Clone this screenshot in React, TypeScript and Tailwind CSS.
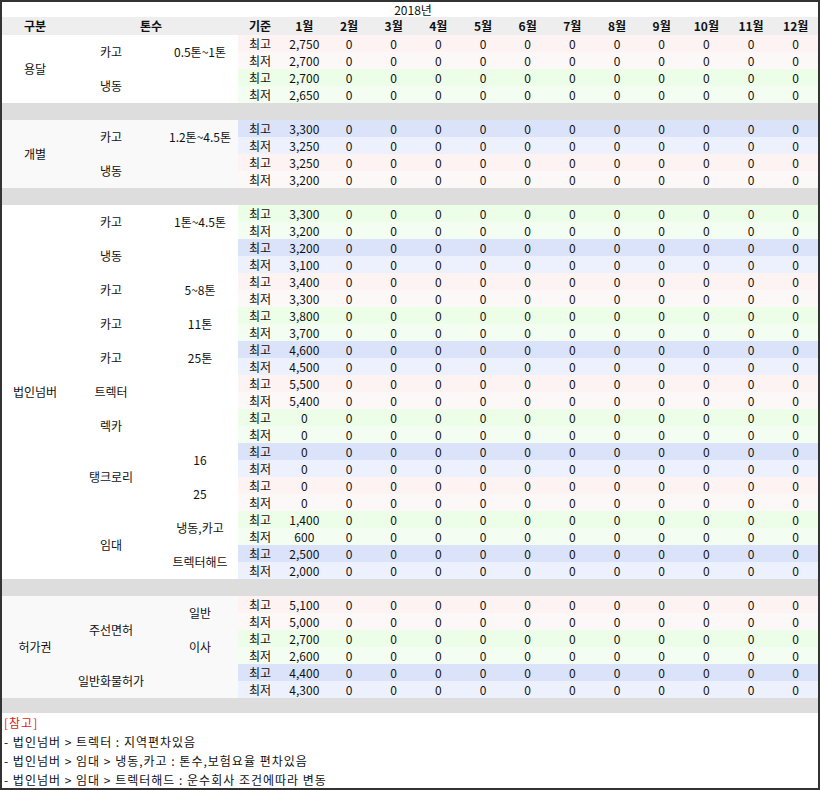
import React from "react";

type Sub = { ton: string; hi: string; lo: string };
type Item = { label: string; subs: Sub[] };
type Group = { name: string; bg: string; items: Item[] };

const groups: Group[] = [
  {
    name: "용달",
    bg: "bg-white",
    items: [
      { label: "카고", subs: [{ ton: "0.5톤~1톤", hi: "2,750", lo: "2,700" }] },
      { label: "냉동", subs: [{ ton: "", hi: "2,700", lo: "2,650" }] },
    ],
  },
  {
    name: "개별",
    bg: "bg-[#f9f9f9]",
    items: [
      { label: "카고", subs: [{ ton: "1.2톤~4.5톤", hi: "3,300", lo: "3,250" }] },
      { label: "냉동", subs: [{ ton: "", hi: "3,250", lo: "3,200" }] },
    ],
  },
  {
    name: "법인넘버",
    bg: "bg-white",
    items: [
      { label: "카고", subs: [{ ton: "1톤~4.5톤", hi: "3,300", lo: "3,200" }] },
      { label: "냉동", subs: [{ ton: "", hi: "3,200", lo: "3,100" }] },
      { label: "카고", subs: [{ ton: "5~8톤", hi: "3,400", lo: "3,300" }] },
      { label: "카고", subs: [{ ton: "11톤", hi: "3,800", lo: "3,700" }] },
      { label: "카고", subs: [{ ton: "25톤", hi: "4,600", lo: "4,500" }] },
      { label: "트렉터", subs: [{ ton: "", hi: "5,500", lo: "5,400" }] },
      { label: "렉카", subs: [{ ton: "", hi: "0", lo: "0" }] },
      {
        label: "탱크로리",
        subs: [
          { ton: "16", hi: "0", lo: "0" },
          { ton: "25", hi: "0", lo: "0" },
        ],
      },
      {
        label: "임대",
        subs: [
          { ton: "냉동,카고", hi: "1,400", lo: "600" },
          { ton: "트렉터해드", hi: "2,500", lo: "2,000" },
        ],
      },
    ],
  },
  {
    name: "허가권",
    bg: "bg-[#f9f9f9]",
    items: [
      {
        label: "주선면허",
        subs: [
          { ton: "일반", hi: "5,100", lo: "5,000" },
          { ton: "이사", hi: "2,700", lo: "2,600" },
        ],
      },
      { label: "일반화물허가", subs: [{ ton: "", hi: "4,400", lo: "4,300" }] },
    ],
  },
];

const tints = [
  ["bg-[#fdf3f3]", "bg-[#fdf8f8]"],
  ["bg-[#ecfde8]", "bg-[#f4fdf1]"],
  ["bg-[#dbe3fb]", "bg-[#edf1fd]"],
];

const months = Array.from({ length: 12 }, (_, i) => `${i + 1}월`);
const grid = "grid grid-cols-[44px_repeat(12,1fr)]";

function DataRow({ kind, value, tint }: { kind: string; value: string; tint: string }) {
  return (
    <div className={`${grid} h-[17px] items-center text-center ${tint}`}>
      <div>{kind}</div>
      <div>{value}</div>
      {Array.from({ length: 11 }, (_, i) => (
        <div key={i}>0</div>
      ))}
    </div>
  );
}

export default function App() {
  let pair = 0;
  return (
    <div
      className="box-border flex h-[790px] w-[820px] flex-col border-2 border-[#333] bg-white text-[12px] leading-none text-[#111]"
      style={{ fontFamily: "'Noto Sans CJK KR', 'Noto Sans', sans-serif" }}
    >
      <div className="flex h-[15px] items-center justify-center pl-[6px]">2018년</div>
      <div className="flex h-[18px] items-center bg-[#eeeeee] font-bold">
        <div className="w-[78px] pr-3 text-center">구분</div>
        <div className="w-[158px] pr-4 text-center">톤수</div>
        <div className={`${grid} flex-1 text-center`}>
          <div>기준</div>
          {months.map((m) => (
            <div key={m}>{m}</div>
          ))}
        </div>
      </div>
      {groups.map((g, gi) => (
        <React.Fragment key={g.name}>
          <div className={`flex ${g.bg}`}>
            <div className="flex w-[78px] items-center justify-center pr-3">{g.name}</div>
            <div className="flex w-[158px] flex-col">
              {g.items.map((it, k) => (
                <div key={k} className="flex">
                  <div className="flex w-[70px] items-center justify-center whitespace-nowrap pr-2">
                    {it.label}
                  </div>
                  <div className="flex flex-1 flex-col">
                    {it.subs.map((s, j) => (
                      <div key={j} className="flex h-[34px] items-center justify-center pl-3">
                        {s.ton}
                      </div>
                    ))}
                  </div>
                </div>
              ))}
            </div>
            <div className="flex flex-1 flex-col">
              {g.items.flatMap((it) =>
                it.subs.map((s) => {
                  const t = tints[pair++ % 3];
                  return (
                    <React.Fragment key={pair}>
                      <DataRow kind="최고" value={s.hi} tint={t[0]} />
                      <DataRow kind="최저" value={s.lo} tint={t[1]} />
                    </React.Fragment>
                  );
                }),
              )}
            </div>
          </div>
          <div className={gi === 3 ? "h-[15px] bg-[#dddddd]" : "h-[17px] bg-[#dddddd]"} />
        </React.Fragment>
      ))}
      <div className="flex flex-col gap-[7px] pl-[2px] pt-[4px] text-[12px] tracking-[1px]">
        <div className="text-[#e02020]">[참고]</div>
        <div>- 법인넘버 &gt; 트렉터 : 지역편차있음</div>
        <div>- 법인넘버 &gt; 임대 &gt; 냉동,카고 : 톤수,보험요율 편차있음</div>
        <div>- 법인넘버 &gt; 임대 &gt; 트렉터해드 : 운수회사 조건에따라 변동</div>
      </div>
    </div>
  );
}
